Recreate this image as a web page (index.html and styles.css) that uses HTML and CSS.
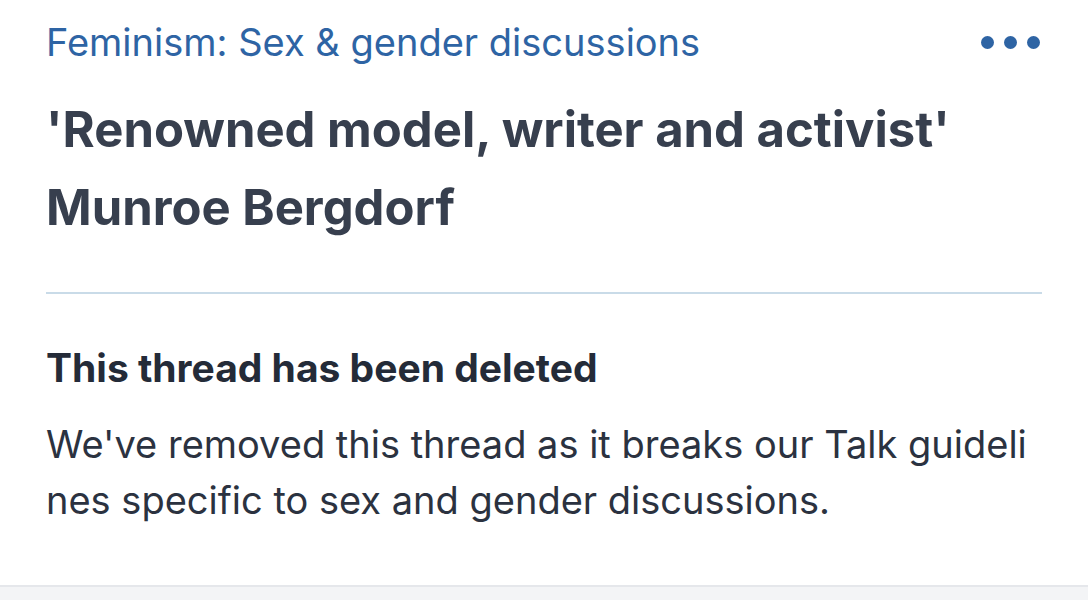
FILE: index.html
```html
<!DOCTYPE html>
<html lang="en">
<head>
<meta charset="utf-8">
<title>Thread deleted</title>
<link rel="stylesheet" href="styles.css">
</head>
<body>
<main class="card">
  <header class="topbar">
    <a class="category" href="#">Feminism: Sex &amp; gender discussions</a>
    <button class="more" aria-label="More options">
      <span class="dot"></span><span class="dot"></span><span class="dot"></span>
    </button>
  </header>
  <h1 class="title">'Renowned model, writer and activist' Munroe Bergdorf</h1>
  <hr class="divider">
  <section class="notice">
    <h2 class="notice-title">This thread has been deleted</h2>
    <p class="notice-text">We've removed this thread as it breaks our Talk guidelines specific to sex and gender discussions.</p>
  </section>
</main>
<footer class="strip"></footer>
</body>
</html>
```

FILE: styles.css
```css
html, body {
  margin: 0;
  padding: 0;
  background: #ffffff;
  font-family: "Inter", "Roboto", "Liberation Sans", sans-serif;
}

.card {
  padding: 0 46px 57px 46px;
}

.topbar {
  display: flex;
  align-items: center;
  justify-content: space-between;
  height: 84px;
}

.category {
  color: #2e64a4;
  font-size: 38px;
  font-weight: 400;
  text-decoration: none;
}

.more {
  display: flex;
  gap: 10px;
  background: none;
  border: 0;
  padding: 0;
  margin-right: 2px;
}

.dot {
  width: 13px;
  height: 13px;
  border-radius: 50%;
  background: #2e64a4;
}

.title {
  margin: 7px 0 0 0;
  color: #373f4e;
  font-size: 49px;
  font-weight: 700;
  line-height: 78px;
}

.divider {
  margin: 45px 0 0 0;
  border: 0;
  height: 2px;
  background: #c9dbe8;
}

.notice {
  padding-top: 50px;
}

.notice-title {
  margin: 0;
  color: #242b38;
  font-size: 39px;
  font-weight: 700;
  line-height: 48px;
}

.notice-text {
  margin: 24px 0 0 0;
  color: #2b3240;
  font-size: 38px;
  line-height: 56px;
  word-break: break-all;
}

.strip {
  height: 15px;
  border-top: 2px solid #e5e7eb;
  background: #f3f4f6;
}
```
